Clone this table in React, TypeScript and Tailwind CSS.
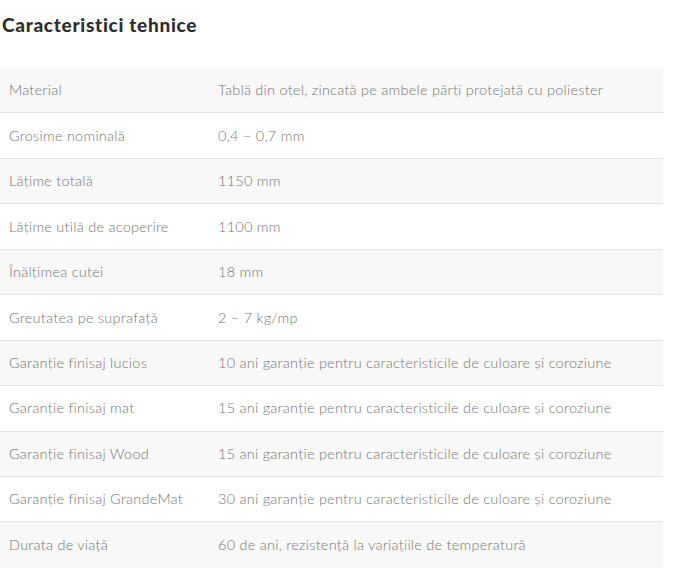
const rows: ReadonlyArray<readonly [string, string]> = [
  ['Material', 'Tablă din oțel, zincată pe ambele părți protejată cu poliester'],
  ['Grosime nominală', '0,4 – 0,7 mm'],
  ['Lățime totală', '1150 mm'],
  ['Lățime utilă de acoperire', '1100 mm'],
  ['Înălțimea cutei', '18 mm'],
  ['Greutatea pe suprafață', '2 – 7 kg/mp'],
  ['Garanție finisaj lucios', '10 ani garanție pentru caracteristicile de culoare și coroziune'],
  ['Garanție finisaj mat', '15 ani garanție pentru caracteristicile de culoare și coroziune'],
  ['Garanție finisaj Wood', '15 ani garanție pentru caracteristicile de culoare și coroziune'],
  ['Garanție finisaj GrandeMat', '30 ani garanție pentru caracteristicile de culoare și coroziune'],
  ['Durata de viață', '60 de ani, rezistență la variațiile de temperatură'],
]

export default function App() {
  return (
    <div className="w-[700px] h-[576px] bg-white overflow-hidden font-['Lato',sans-serif]">
      <h2 className="pt-[15px] pl-[2px] h-[68px] text-[19px] leading-[20px] font-black text-[#2e2e2e] tracking-[0.7px]">
        Caracteristici tehnice
      </h2>
      <div className="w-[663px]">
        {rows.map(([label, value], i) => (
          <div
            key={label}
            className={
              'flex items-center h-[45.45px] text-[14.5px] tracking-[0.25px] font-light text-[#777777] ' +
              (i % 2 === 0 ? 'bg-[#f8f8f8]' : 'bg-white') +
              (i < rows.length - 1 ? ' border-b border-[#e3e3e3]' : '')
            }
          >
            <div className="w-[218px] pl-[9px] shrink-0">{label}</div>
            <div>{value}</div>
          </div>
        ))}
      </div>
    </div>
  )
}
